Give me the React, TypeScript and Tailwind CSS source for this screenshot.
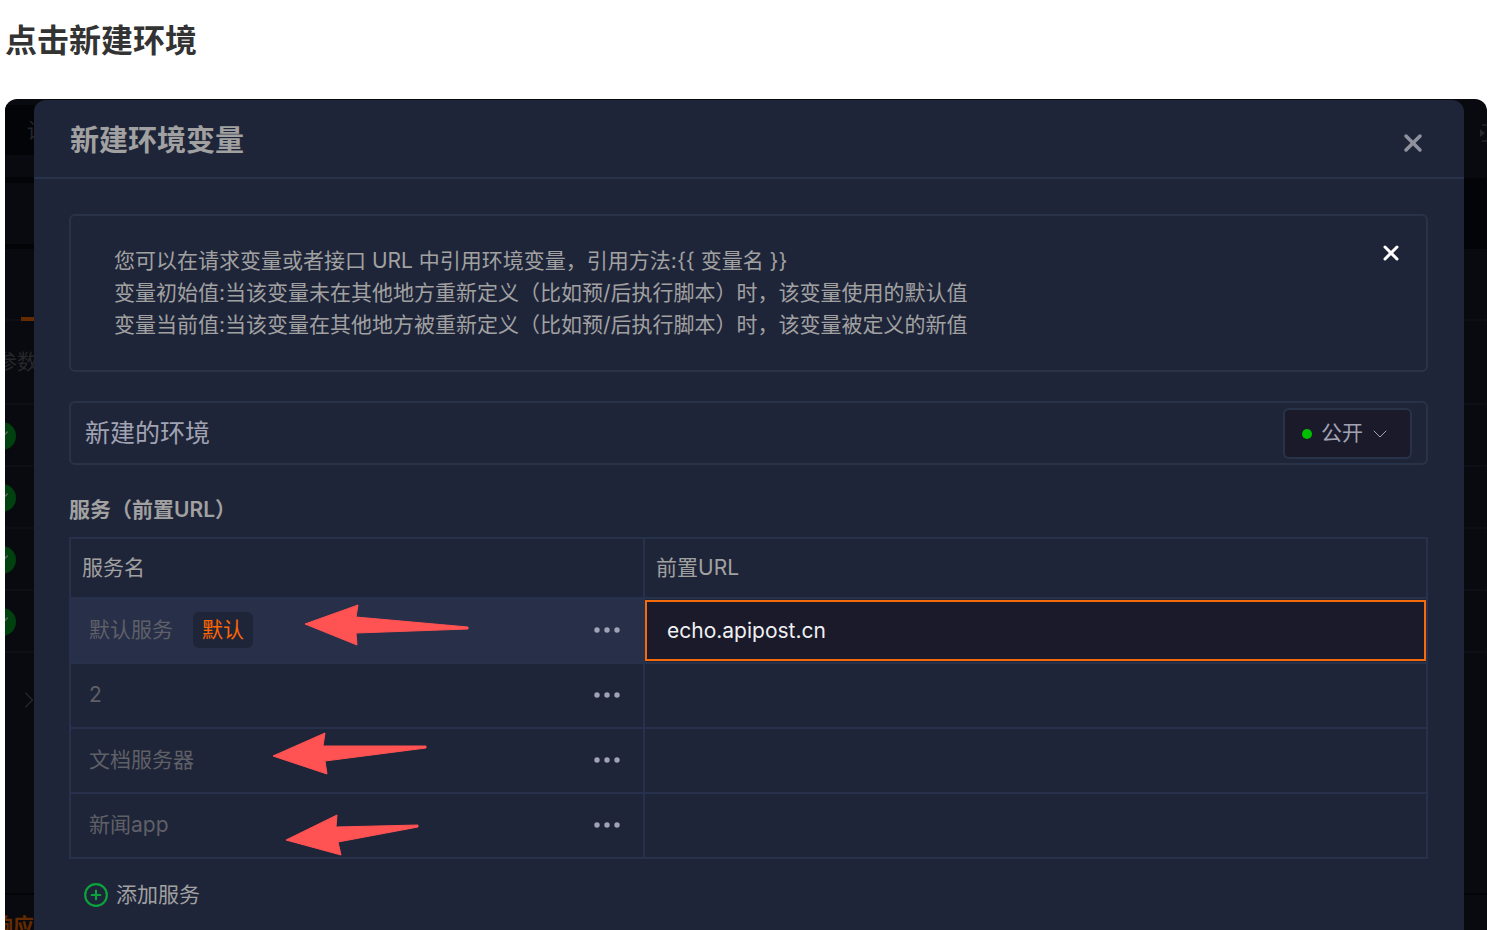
import { useState } from "react";
import { X, ChevronDown, ChevronRight, CirclePlus, Check } from "lucide-react";

const ARROWS = {
    first: "1,20 54,1 52,13 164,23 164,25 52,29 53,41",
    second: "1,24 53,1 51,14 154,14 154,16 53,29 55,42",
    third: "1,26 52,1 51,13 133,11 133,13 53,28 56,41",
};

const services = [
    { id: 1, name: "默认服务", url: "echo.apipost.cn", isDefault: true, arrow: ARROWS.first, arrowPos: "left-[233px] top-[4px]" },
    { id: 2, name: "2", url: "", isDefault: false, arrow: "", arrowPos: "" },
    { id: 3, name: "文档服务器", url: "", isDefault: false, arrow: ARROWS.second, arrowPos: "left-[201px] top-[2px]" },
    { id: 4, name: "新闻app", url: "", isDefault: false, arrow: ARROWS.third, arrowPos: "left-[214px] top-[19px]" },
];

function Dots() {
    return (
        <svg width="28" height="8" viewBox="0 0 28 8" fill="#a0a3b5">
            <circle cx="4" cy="4" r="2.7" />
            <circle cx="14" cy="4" r="2.7" />
            <circle cx="24" cy="4" r="2.7" />
        </svg>
    );
}

function CheckDot() {
    return (
        <div className="h-[62px] border-b-2 border-[#0e0f16] pt-[2px] flex items-center">
            <span className="-ml-[17px] size-7 shrink-0 rounded-full bg-[#00410f] flex items-center justify-center">
                <Check size={16} strokeWidth={2} className="text-[#5c6a60]" />
            </span>
        </div>
    );
}

// Dimmed page that peeks out left of the dialog
function LeftStrip() {
    return (
        <div aria-hidden="true" className="w-[29px] shrink-0 overflow-hidden whitespace-nowrap text-[21px] text-[#26272b]">
            <div className="h-[6px]" />
            <div className="h-[50px] bg-[#030408] pl-[22px] leading-[52px]">设</div>
            <div className="h-[22px]" />
            <div className="h-[6px] bg-[#030408]" />
            <div className="h-[61px]" />
            <div className="h-[5px] bg-[#030408]" />
            <div className="h-[72px] bg-linear-to-t from-[#0e0f16] from-[2px] to-transparent to-[2px] flex items-end justify-end">
                <span className="h-1 w-[13px] bg-[#662a00]" />
            </div>
            <div className="h-[84px] border-b-2 border-[#0e0f16] leading-[82px]">
                <span className="-ml-[9px]">参数</span>
            </div>
            <CheckDot />
            <CheckDot />
            <CheckDot />
            <CheckDot />
            <div className="h-[242px] border-b-2 border-[#030408] pt-[33px] pl-[10px]">
                <ChevronRight size={28} strokeWidth={1} />
            </div>
            <div className="leading-[62px] font-bold text-[#662a00]">
                <span className="-ml-[13px]">响应</span>
            </div>
        </div>
    );
}

function RightStrip() {
    return (
        <div aria-hidden="true" className="w-[23px] shrink-0 overflow-hidden">
            <div className="h-[79px] flex items-start justify-end pt-[25px]">
                <svg width="8" height="18" viewBox="0 0 8 18" stroke="#1c1d22" fill="none" strokeWidth="2">
                    <path d="M3 1h5M3 17h5" />
                    <path d="M1 5l5 4-5 4z" fill="#26272b" stroke="none" />
                </svg>
            </div>
            <div className="h-[71px] bg-[#030408]" />
            <div className="h-[72px] border-b-2 border-[#0e0f16]" />
            <div className="h-[84px] border-b-2 border-[#0e0f16]" />
            <div className="h-[62px] border-b-2 border-[#0e0f16]" />
            <div className="h-[62px] border-b-2 border-[#0e0f16]" />
            <div className="h-[62px] border-b-2 border-[#0e0f16]" />
            <div className="h-[62px] border-b-2 border-[#0e0f16]" />
            <div className="h-[242px] border-b-2 border-[#030408]" />
        </div>
    );
}

export default function App() {
    const [envName, setEnvName] = useState("新建的环境");
    const [urls, setUrls] = useState<string[]>(services.map((s) => s.url));
    const [showTip, setShowTip] = useState(true);

    return (
        <div className="h-screen flex flex-col overflow-hidden bg-white px-[5px] font-['Inter','Noto_Sans_CJK_SC',sans-serif]">
            <h1 className="pt-[21px] pb-[38px] text-[32px] leading-10 font-bold text-[#333333]">点击新建环境</h1>

            <div className="flex-1 min-h-0 flex overflow-hidden rounded-t-xl bg-[#090a0f]">
                <LeftStrip />

                <section role="dialog" aria-labelledby="dialog-title" className="flex-1 min-w-0 mt-px rounded-t-xl bg-[#1f2539] text-[21px] leading-8 text-[#a1a1a1]">
                    <header className="h-[79px] border-b-2 border-[#28334a] pl-9 pr-[37px] pt-1 flex items-center justify-between">
                        <h2 id="dialog-title" className="text-[29px] font-semibold">新建环境变量</h2>
                        <button type="button" aria-label="关闭" className="pt-1 text-[#8f919c]">
                            <X size={28} strokeWidth={3} />
                        </button>
                    </header>

                    <div className="pl-[35px] pr-9 pt-[35px]">
                        {showTip && (
                            <div className="mb-[29px] flex items-start justify-between rounded-md border-2 border-[#28334a] py-[29px] pl-[43px] pr-[23px]">
                                <div>
                                    <p>您可以在请求变量或者接口 URL 中引用环境变量，引用方法:{"{{ 变量名 }}"}</p>
                                    <p>变量初始值:当该变量未在其他地方重新定义（比如预/后执行脚本）时，该变量使用的默认值</p>
                                    <p>变量当前值:当该变量在其他地方被重新定义（比如预/后执行脚本）时，该变量被定义的新值</p>
                                </div>
                                <button type="button" aria-label="关闭提示" onClick={() => setShowTip(false)} className="-mt-1 text-white">
                                    <X size={24} strokeWidth={3} />
                                </button>
                            </div>
                        )}

                        <div className="mb-[29px] h-16 flex items-center justify-between rounded-md border-2 border-[#28334a] px-[14px]">
                            <input aria-label="环境名称" value={envName} onChange={(e) => setEnvName(e.target.value)}
                                className="flex-1 min-w-0 bg-transparent text-[25px] text-[#a1a3b3] outline-none" />
                            <div className="relative">
                                <select aria-label="可见范围" defaultValue="public"
                                    className="block h-[51px] w-[129px] appearance-none rounded-md border-2 border-[#28334a] bg-[#1a1a2b] pl-9 text-[#a1a3b3] outline-none">
                                    <option value="public">公开</option>
                                    <option value="private">私有</option>
                                </select>
                                <span className="pointer-events-none absolute left-[19px] top-[21px] size-[10px] rounded-full bg-[#00be00]" />
                                <ChevronDown size={24} strokeWidth={1} className="pointer-events-none absolute right-5 top-[14px] text-[#a1a3b3]" />
                            </div>
                        </div>

                        <h3 className="mb-[11px] font-semibold">服务（前置URL）</h3>

                        <table className="w-full table-fixed border-collapse">
                            <thead>
                                <tr className="h-[60px]">
                                    <th className="w-[574px] border-2 border-[#28314b] pl-[11px] text-left font-normal">服务名</th>
                                    <th className="border-2 border-[#28314b] pl-[11px] text-left font-normal">前置URL</th>
                                </tr>
                            </thead>
                            <tbody>
                                {services.map((s, idx) => (
                                    <tr key={s.id} className="h-[65px]">
                                        <td className={`border-2 border-[#28314b] p-0 ${s.isDefault ? "bg-[#282f49]" : ""}`}>
                                            <div className="relative h-[62px] flex items-center justify-between pl-[18px] pr-[22px] pb-[2px] text-[#5f6067]">
                                                <div className="flex items-center gap-5">
                                                    <span>{s.name}</span>
                                                    {s.isDefault && <span className="h-9 rounded-md bg-[#1f2539] px-[9px] leading-9 text-[#ff6600]">默认</span>}
                                                </div>
                                                {s.arrow && (
                                                    <svg width="166" height="44" viewBox="0 0 166 44" className={`pointer-events-none absolute ${s.arrowPos}`}>
                                                        <polygon points={s.arrow} fill="#ff5252" stroke="#ff5252" strokeWidth="1" strokeLinejoin="round" />
                                                    </svg>
                                                )}
                                                <button type="button" aria-label={`${s.name} 更多`} className="flex"><Dots /></button>
                                            </div>
                                        </td>
                                        <td className="border-2 border-[#28314b] p-0">
                                            <input aria-label={`${s.name} 前置URL`} value={urls[idx]}
                                                onChange={(e) => setUrls(urls.map((u, i) => (i === idx ? e.target.value : u)))}
                                                className={`block h-[61px] w-full border-2 pl-5 text-[#f0f0f2] outline-none ${s.isDefault ? "border-[#f56a0a] bg-[#1a1a2b]" : "border-transparent bg-transparent"}`} />
                                        </td>
                                    </tr>
                                ))}
                            </tbody>
                        </table>

                        <button type="button" className="mt-5 ml-[14px] flex items-center gap-[7px]">
                            <CirclePlus size={26} strokeWidth={2} className="text-[#0aa33c]" />
                            添加服务
                        </button>
                    </div>
                </section>

                <RightStrip />
            </div>
        </div>
    );
}
